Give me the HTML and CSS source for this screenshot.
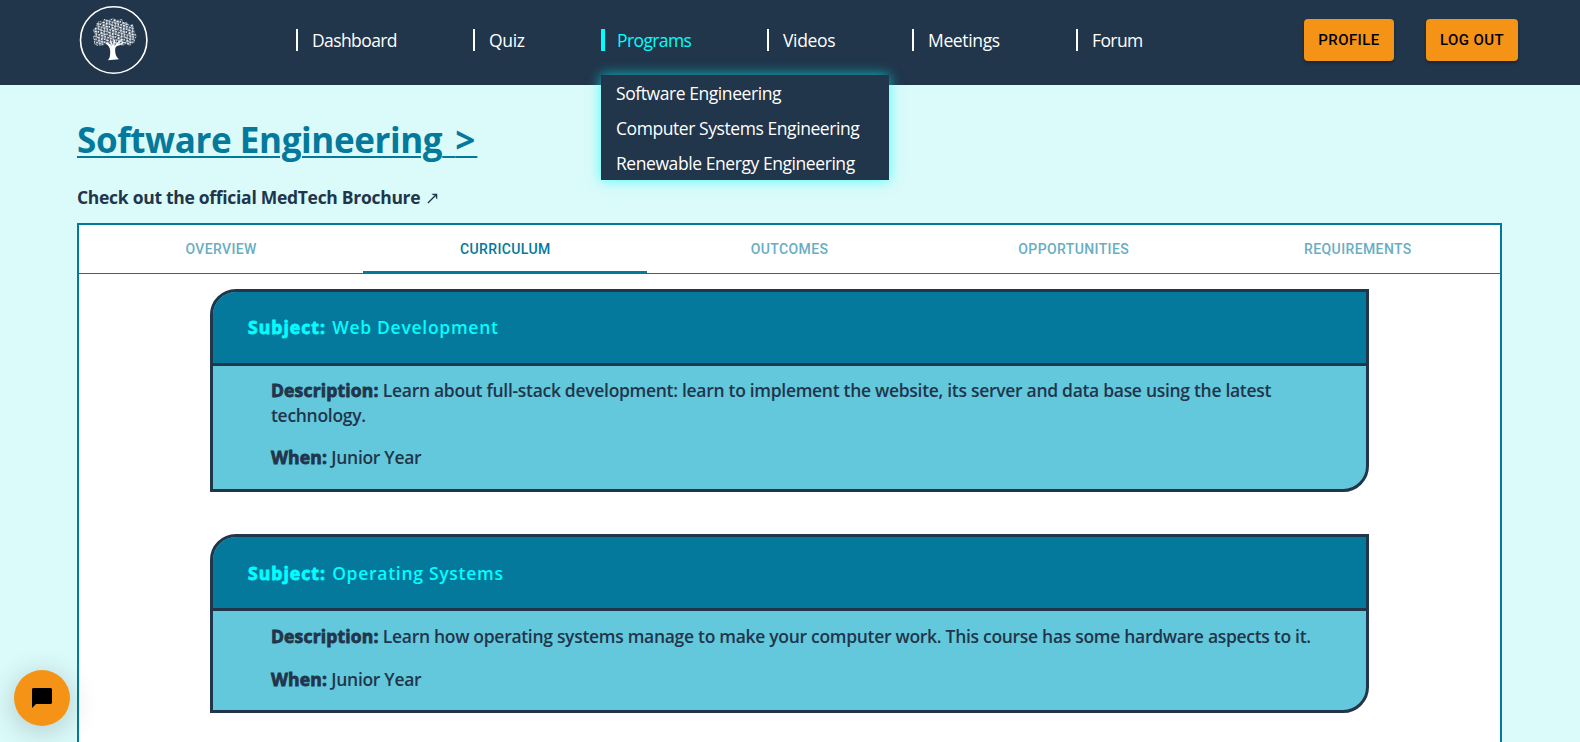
FILE: index.html
```
<!DOCTYPE html>
<html lang="en">
<head>
<meta charset="utf-8">
<title>MedTech Programs</title>
<link rel="stylesheet" href="styles.css">
</head>
<body>
<header class="header">
  <a class="logo" href="#" aria-label="Home">
    <svg width="70" height="70" viewBox="0 0 70 70">
      <defs>
        <pattern id="leaves" width="9" height="8" patternUnits="userSpaceOnUse" patternTransform="rotate(17)">
          <g fill="#fff">
            <ellipse cx="1.5" cy="1.4" rx="1.5" ry="1"/>
            <ellipse cx="4.8" cy="1.7" rx="1" ry="1.4"/>
            <ellipse cx="7.6" cy="1.1" rx="1.2" ry=".9"/>
            <ellipse cx="2.6" cy="4.2" rx="1.1" ry="1.3"/>
            <ellipse cx="5.8" cy="4.5" rx="1.5" ry=".9"/>
            <ellipse cx="8.3" cy="3.9" rx=".7" ry="1.2"/>
            <ellipse cx="1.2" cy="6.7" rx="1.1" ry=".9"/>
            <ellipse cx="4.2" cy="6.8" rx="1.3" ry="1"/>
            <ellipse cx="7.2" cy="6.8" rx="1" ry="1.1"/>
          </g>
        </pattern>
      </defs>
      <circle cx="34.7" cy="35" r="33.2" fill="none" stroke="#fff" stroke-width="1.6"/>
      <path fill="url(#leaves)" d="M14 26l1-3 3-1-1-3 3-3 4 1 1-3 5 1 4-2 4 2 5-1 1 3 4 0 2 3 4-1 1 5 1 4 2 3-2 3 0 4-4 1-1 2-4-2-4 2-4-1-5-1-4 1-4-1-4 2-3-1 0 1-4-2 0-4-1-3 2-3z"/>
      <path fill="#fff" d="M28.500 55.300C31 54 31.200 50 31.200 46 31 42 29 40 26 38l.8-.8c3 1 5 2 6 4L31 36h1l2 4 1-5h1l-.5 6c2-3 4-5 7-6l.5.8c-1.500 1-3 2-4 3.500 3-.3 4-2 6-2.500l.2.800c-2 1.500-4 3-7 3.300-2 1-2.200 2.400-2 5.100 0 3 1 6 3.800 8.300z"/>
    </svg>
  </a>
  <nav class="nav">
    <a class="nav-item nav-item-tight" href="#">Dashboard</a>
    <a class="nav-item" href="#">Quiz</a>
    <div class="nav-group">
      <a class="nav-item nav-item-tight nav-item-active" href="#">Programs</a>
      <div class="dropdown">
        <a class="dropdown-item" href="#">Software Engineering</a>
        <a class="dropdown-item" href="#">Computer Systems Engineering</a>
        <a class="dropdown-item" href="#">Renewable Energy Engineering</a>
      </div>
    </div>
    <a class="nav-item" href="#">Videos</a>
    <a class="nav-item" href="#">Meetings</a>
    <a class="nav-item nav-item-tight" href="#">Forum</a>
  </nav>
  <div class="actions">
    <button class="button button-profile">PROFILE</button>
    <button class="button button-logout">LOG OUT</button>
  </div>
</header>
<main class="main">
  <h1 class="title">Software Engineering<span class="title-gap"> </span><span class="title-mark">&gt;</span></h1>
  <p class="brochure">Check out the official MedTech Brochure <svg class="arrow" width="11" height="11" viewBox="0 0 12 12"><path d="M1 11L10 2" fill="none" stroke="currentColor" stroke-width="1.500"/><path d="M5 .8H11.200V7L9.600 5.200V2.400H6.800z" fill="currentColor"/></svg></p>
  <section class="panel">
    <div class="tabs">
      <div class="tab">OVERVIEW</div>
      <div class="tab tab-active">CURRICULUM</div>
      <div class="tab">OUTCOMES</div>
      <div class="tab">OPPORTUNITIES</div>
      <div class="tab">REQUIREMENTS</div>
    </div>
    <div class="cards">
      <article class="card">
        <div class="card-head"><b>Subject:</b><span>Web Development</span></div>
        <div class="card-body">
          <p><b>Description:</b> Learn about full-stack development: learn to implement the website, its server and data base using the latest technology.</p>
          <p><b>When:</b> Junior Year</p>
        </div>
      </article>
      <article class="card card-short">
        <div class="card-head"><b>Subject:</b><span>Operating Systems</span></div>
        <div class="card-body">
          <p><b>Description:</b> Learn how operating systems manage to make your computer work. This course has some hardware aspects to it.</p>
          <p><b>When:</b> Junior Year</p>
        </div>
      </article>
    </div>
  </section>
</main>
<button class="chat" aria-label="Chat">
  <svg width="24" height="24" viewBox="0 0 24 24"><path d="M20.500 2h-17C2.700 2 2 2.700 2 3.500V22l4-4h14.500c.8 0 1.500-.7 1.500-1.500v-13c0-.8-.7-1.500-1.500-1.500z"/></svg>
</button>
</body>
</html>
```
FILE: styles.css
```
* { box-sizing: border-box; }

body {
  margin: 0;
  height: 742px;
  overflow: hidden;
  background: #dbfafa;
  color: #21354b;
  font-family: "Open Sans", "Noto Sans", sans-serif;
  font-size: 17.500px;
}

a { color: inherit; text-decoration: none; }

.header {
  height: 85px;
  padding: 0 62px 0 79px;
  display: flex;
  background: #21354b;
  color: #fff;
}

.logo { width: 217px; padding-top: 5px; }

.nav {
  display: grid;
  grid-template-columns: 177px 128px 166px 145px 164px 100px;
  padding-top: 29px;
}

.nav-item {
  display: block;
  height: 22px;
  line-height: 23px;
  padding-left: 14px;
  border-left: 2px solid #fff;
  letter-spacing: -0.35px;
  white-space: nowrap;
}

.nav-item-tight { letter-spacing: -0.6px; }

.nav-item-active {
  padding-left: 12px;
  border-left: 4px solid #00ffff;
  color: #00ffff;
}

.nav-group { position: relative; }

.dropdown {
  position: absolute;
  top: 46px;
  left: 0;
  width: 288px;
  background: #21354b;
  box-shadow: 0 0 12px #00ffffb0;
}

.dropdown-item {
  display: block;
  height: 35px;
  line-height: 37px;
  padding-left: 15px;
  letter-spacing: -0.43px;
  white-space: nowrap;
}

.actions {
  margin-left: auto;
  padding-top: 19px;
  display: flex;
  gap: 32px;
}

.button {
  height: 42px;
  padding: 0;
  border: 0;
  border-radius: 4px;
  background: #f49315;
  color: #000;
  font: 500 15px/42px Roboto, sans-serif;
  letter-spacing: 0.43px;
  box-shadow: 0 2px 3px #0004;
}

.button-profile { width: 90px; }
.button-logout { width: 92px; }

.main { padding: 0 78px 0 77px; }

.title {
  margin: 0;
  padding-top: 30px;
  height: 96px;
  color: #04799b;
  font-size: 35px;
  line-height: 50px;
  font-weight: 700;
  letter-spacing: -0.4px;
  text-decoration: underline;
  text-decoration-thickness: 2px;
  text-underline-offset: 3px;
}

.title-gap { letter-spacing: 4px; }
.title-mark { letter-spacing: 2px; }

.brochure {
  margin: 0;
  height: 42px;
  line-height: 32px;
  font-weight: 700;
  letter-spacing: -0.29px;
  white-space: nowrap;
}

.arrow { margin-left: 2px; }

.panel {
  height: 519px;
  border: 2px solid #04799b;
  border-bottom: 0;
  background: #fff;
}

.tabs {
  display: grid;
  grid-template-columns: repeat(5, 1fr);
  height: 49px;
  border-bottom: 1px solid #04799b;
}

.tab {
  color: #68aec2;
  font: 500 14px/48px Roboto, sans-serif;
  letter-spacing: 0.38px;
  text-align: center;
}

.tab-active {
  color: #04799b;
  box-shadow: inset 0 -2px #04799b;
}

.cards {
  padding: 15px 131px 0;
  display: grid;
  gap: 42px;
}

.card {
  border: 3px solid #21354b;
  border-radius: 26px 0;
  overflow: hidden;
  background: #63c8dc;
  font-weight: 600;
}

.card-head {
  height: 74px;
  padding-left: 35px;
  display: flex;
  gap: 6px;
  border-bottom: 3px solid #21354b;
  background: #04799b;
  color: #00ffff;
  line-height: 70px;
  letter-spacing: 0.72px;
}

.card-head b { letter-spacing: 1.08px; }

.card b {
  font-weight: 700;
  -webkit-text-stroke: 0.8px currentColor;
}

.card-body {
  padding: 12px 50px 19px 58px;
  letter-spacing: -0.3px;
}

.card-body b { letter-spacing: 0.16px; }

.card-body p { margin: 0; line-height: 25px; }
.card-body p + p { margin-top: 17px; }

.card-short .card-head { line-height: 72px; }
.card-short .card-body { padding-top: 13px; padding-bottom: 18px; }
.card-short .card-body p + p { margin-top: 18px; }

.chat {
  position: fixed;
  left: 14px;
  top: 670px;
  width: 56px;
  height: 56px;
  padding: 0;
  border: 0;
  border-radius: 50%;
  background: #f49315;
  display: grid;
  place-items: center;
  box-shadow: 0 5px 30px #0003;
}
```
